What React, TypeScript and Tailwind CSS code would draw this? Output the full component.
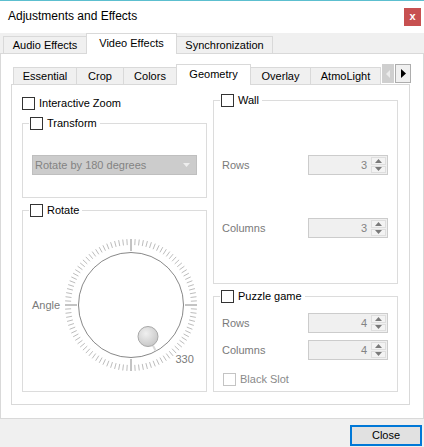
import React from "react";

const OUTER_TABS = [
  { label: "Audio Effects", w: "w-[84px]" },
  { label: "Video Effects", w: "w-[91px]", active: true },
  { label: "Synchronization", w: "w-[97px]" },
];

const INNER_TABS = [
  { label: "Essential", w: "w-[64px]" },
  { label: "Crop", w: "w-[48px]" },
  { label: "Colors", w: "w-[54px]" },
  { label: "Geometry", w: "w-[75px]", active: true },
  { label: "Overlay", w: "w-[61px]" },
  { label: "AtmoLight", w: "w-[71px]" },
];

function Tab({ label, w, active, first }: { label: string; w: string; active?: boolean; first?: boolean }) {
  return (
    <div
      className={`${w} ${first ? "" : "-ml-px"} ${
        active
          ? "relative z-10 h-[21px] -mb-px bg-white pb-[2px]"
          : "h-[17px] bg-[#f0f0f0]"
      } flex items-center justify-center border border-b-0 border-[#d9d9d9] whitespace-nowrap`}
    >
      {label}
    </div>
  );
}

function Box({ disabled }: { disabled?: boolean }) {
  return (
    <span
      className={`block w-[13px] h-[13px] shrink-0 bg-white border ${
        disabled ? "border-[#c4c4c4]" : "border-[#333333]"
      }`}
    />
  );
}

function Check({ label, disabled }: { label: string; disabled?: boolean }) {
  return (
    <div className={`flex items-center gap-[4px] h-[13px] ${disabled ? "text-[#8a8a8a]" : "text-black"}`}>
      <Box disabled={disabled} />
      <span className="leading-none">{label}</span>
    </div>
  );
}

function Group({ label, h, className, children }: { label: string; h: string; className?: string; children?: React.ReactNode }) {
  return (
    <fieldset className={`${h} ${className ?? ""} border border-[#dcdcdc] min-w-0`}>
      <legend className="ml-[6px] pl-[1px] pr-[3px]">
        <Check label={label} />
      </legend>
      {children}
    </fieldset>
  );
}

function Arrow({ up }: { up?: boolean }) {
  return (
    <span className="flex-1 flex items-center justify-center border border-[#dedede] bg-[#f3f3f3]">
      <svg width="7" height="4" viewBox="0 0 7 4">
        <path d={up ? "M0 4h7L3.5 0z" : "M0 0h7L3.5 4z"} fill="#7a7a7a" />
      </svg>
    </span>
  );
}

function Spin({ value }: { value: number }) {
  return (
    <div className="flex w-[80px] h-[20px] border border-[#cccccc] bg-[#f0f0f0]">
      <span className="flex-1 text-right pr-[4px] leading-[18px] text-[#838383]">{value}</span>
      <div className="flex flex-col w-[16px] py-[1px] pr-[1px] gap-[1px]">
        <Arrow up />
        <Arrow />
      </div>
    </div>
  );
}

function SpinRow({ label, value, className }: { label: string; value: number; className: string }) {
  return (
    <div className={`${className} flex items-center justify-between pl-[8px] pr-[9px]`}>
      <span className="text-[#7a7a7a]">{label}</span>
      <Spin value={value} />
    </div>
  );
}

function Dial() {
  const c = 70;
  const ticks = Array.from({ length: 100 }, (_, i) => {
    const a = (i * 3.6 * Math.PI) / 180;
    const major = i % 25 === 0;
    const r1 = major ? 54 : 60;
    const r2 = 66;
    return (
      <line
        key={i}
        x1={c + r1 * Math.sin(a)}
        y1={c - r1 * Math.cos(a)}
        x2={c + r2 * Math.sin(a)}
        y2={c - r2 * Math.cos(a)}
        stroke={major ? "#7a7a7a" : "#b4b4b4"}
        strokeWidth="0.9"
      />
    );
  });
  return (
    <svg width="140" height="140" viewBox="0 0 140 140" className="shrink-0">
      <defs>
        <radialGradient id="knob" cx="40%" cy="35%" r="70%">
          <stop offset="0%" stopColor="#f0f0f0" />
          <stop offset="100%" stopColor="#c6c6c6" />
        </radialGradient>
      </defs>
      {ticks}
      <circle cx={c} cy={c} r="52.5" fill="#ffffff" stroke="#6a6a6a" strokeWidth="0.8" />
      <line x1="91.9" y1="110.5" x2="94.7" y2="115.8" stroke="#dadada" strokeWidth="2" />
      <circle cx="87" cy="101.5" r="10" fill="url(#knob)" stroke="#a8a8a8" strokeWidth="1" />
      <text x="114.5" y="127.5" fontSize="11" fill="#7a7a7a" fontFamily="'Liberation Sans', Arial, sans-serif">
        330
      </text>
    </svg>
  );
}

export default function App() {
  return (
    <div className="w-[424px] h-[447px] overflow-hidden bg-[#f0f0f0] text-[11px] text-black font-['Liberation_Sans',Arial,sans-serif]">
      {/* Title bar */}
      <div className="h-[33px] bg-white border-t border-[#5cbfcf] flex items-center pl-[8px] pr-[3px]">
        <span className="flex-1 text-[12px] -mt-[3px]">Adjustments and Effects</span>
        <span className="w-[17px] h-[18px] bg-[#c75050] text-white font-bold text-[11px] flex items-center justify-center pb-[2px]">
          x
        </span>
      </div>

      {/* Outer tabs */}
      <div className="flex items-end h-[20px] pl-[3px]">
        {OUTER_TABS.map((t, i) => (
          <Tab key={t.label} label={t.label} w={t.w} active={t.active} first={i === 0} />
        ))}
      </div>

      <div className="h-[366px] bg-white border border-[#d9d9d9] pt-[10px] pl-[10px]">
        {/* Inner tabs */}
        <div className="flex items-end h-[20px] pl-[2px]">
          {INNER_TABS.map((t, i) => (
            <Tab key={t.label} label={t.label} w={t.w} active={t.active} first={i === 0} />
          ))}
          <span className="ml-[1px] mb-[1px] w-[12px] h-[19px] bg-[#cfcfcf] flex items-center justify-center">
            <svg width="4" height="8" viewBox="0 0 4 8">
              <path d="M4 0v8L0 4z" fill="#ececec" />
            </svg>
          </span>
          <span className="ml-[1px] mb-[1px] w-[16px] h-[19px] bg-[#f0f0f0] border border-[#adadad] flex items-center justify-center">
            <svg width="5" height="9" viewBox="0 0 5 9">
              <path d="M0 0v9l5-4.5z" fill="#000000" />
            </svg>
          </span>
        </div>

        {/* Geometry page */}
        <div className="w-[399px] h-[321px] bg-white border border-[#d9d9d9] flex gap-[6px] pl-[10px]">
          <div className="w-[185px] pt-[12px] flex flex-col">
            <Check label="Interactive Zoom" />
            <Group label="Transform" h="h-[81px]" className="mt-[7px]">
              <div className="mt-[25px] ml-[9px] w-[165px] h-[20px] flex items-center border border-[#bfbfbf] bg-[#cccccc] pl-[2px] text-[#838383]">
                <span className="flex-1">Rotate by 180 degrees</span>
                <svg width="7" height="4" viewBox="0 0 7 4" className="mr-[6px]">
                  <path d="M0 0h7L3.5 4z" fill="#eeeeee" />
                </svg>
              </div>
            </Group>
            <Group label="Rotate" h="h-[188px]" className="mt-[6px]">
              <div className="mt-[18px] h-[140px] flex items-center pl-[9px]">
                <span className="w-[29px] text-[#7a7a7a]">Angle</span>
                <Dial />
              </div>
            </Group>
          </div>

          <div className="w-[185px] pt-[9px] flex flex-col">
            <Group label="Wall" h="h-[190px]">
              <SpinRow label="Rows" value={3} className="mt-[48px]" />
              <SpinRow label="Columns" value={3} className="mt-[43px]" />
            </Group>
            <Group label="Puzzle game" h="h-[102px]" className="mt-[6px]">
              <SpinRow label="Rows" value={4} className="mt-[10px]" />
              <SpinRow label="Columns" value={4} className="mt-[7px]" />
              <div className="mt-[13px] pl-[9px]">
                <Check label="Black Slot" disabled />
              </div>
            </Group>
          </div>
        </div>
      </div>

      {/* Bottom buttons */}
      <div className="flex justify-end pt-[6px] pr-[2px]">
        <button className="w-[72px] h-[21px] border-2 border-[#0078d7] bg-[#e1e1e1] flex items-center justify-center">
          Close
        </button>
      </div>
    </div>
  );
}
